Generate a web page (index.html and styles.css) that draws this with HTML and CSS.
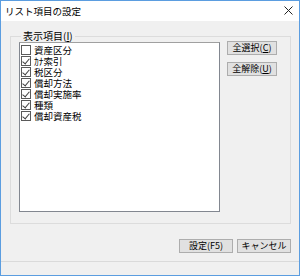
FILE: index.html
```html
<!DOCTYPE html>
<html lang="ja">
<head>
    <meta charset="UTF-8">
    <title>リスト項目の設定</title>
    <link rel="stylesheet" href="styles.css">
</head>
<body>
    <div class="window">
        <div class="titlebar">
            <span class="title">リスト項目の設定</span>
            <span class="close">
                <svg width="9" height="9" viewBox="0 0 9 9">
                    <path d="M0.5 0.5 L8.5 8.5 M8.5 0.5 L0.5 8.5" stroke="#222" stroke-width="1" fill="none"/>
                </svg>
            </span>
        </div>
        <div class="body">
            <fieldset class="group">
                <legend>表示項目(<u>I</u>)</legend>
                <div class="group-inner">
                    <ul class="list">
                        <li><span class="check"></span>資産区分</li>
                        <li><span class="check on"></span>ｶﾅ索引</li>
                        <li><span class="check on"></span>税区分</li>
                        <li><span class="check on"></span>償却方法</li>
                        <li><span class="check on"></span>償却実施率</li>
                        <li><span class="check on"></span>種類</li>
                        <li><span class="check on"></span>償却資産税</li>
                    </ul>
                    <div class="side-buttons">
                        <button class="btn">全選択(<u>C</u>)</button>
                        <button class="btn">全解除(<u>U</u>)</button>
                    </div>
                </div>
            </fieldset>
            <div class="footer">
                <button class="btn btn-wide">設定(F5)</button>
                <button class="btn btn-wide">キャンセル</button>
            </div>
        </div>
        <div class="statusbar"></div>
    </div>
</body>
</html>
```

FILE: styles.css
```css
*{
    margin: 0;
    padding: 0;
    box-sizing: border-box;
}
body{
    font-family: "Noto Sans CJK JP", sans-serif;
    font-size: 10px;
    color: #000;
    background: #fff;
}
.window{
    width: 300px;
    height: 276px;
    border: 1px solid #5b9de0;
    display: flex;
    flex-direction: column;
    background-color: #f0f0f0;
}
.titlebar{
    height: 20px;
    background-color: #fff;
    display: flex;
    justify-content: space-between;
    align-items: center;
    padding: 0 6px 1px 4px;
}
.title{
    font-size: 9.5px;
    line-height: 12px;
}
.close{
    display: flex;
}
.body{
    height: 240px;
    padding: 10px 8px 0 9px;
}
.group{
    border: 1px solid #dcdcdc;
    padding: 1px 13px 11px 8px;
    height: 193px;
}
.group legend{
    line-height: 10px;
    padding: 0 2px;
    margin-left: 2px;
    font-size: 10px;
}
.group-inner{
    display: flex;
    justify-content: space-between;
}
.list{
    list-style: none;
    width: 201px;
    height: 170px;
    background-color: #fff;
    border: 1px solid #828790;
    border-top-color: #a0a0a0;
    padding: 1px 0 0 1px;
}
.list li{
    height: 11px;
    line-height: 10px;
    display: flex;
    align-items: center;
    gap: 3px;
    font-size: 9.5px;
    white-space: nowrap;
}
.check{
    flex: none;
    width: 10px;
    height: 10px;
    border: 1px solid #5a5a5a;
    background-color: #fff;
    position: relative;
}
.check.on::after{
    content: "";
    position: absolute;
    left: 2px;
    top: 0px;
    width: 3px;
    height: 6px;
    border-right: 1px solid #404040;
    border-bottom: 1px solid #404040;
    transform: rotate(40deg);
}
.side-buttons{
    display: flex;
    flex-direction: column;
    gap: 7px;
    margin-top: -1px;
}
.btn{
    font-family: "Noto Sans CJK JP", sans-serif;
    font-size: 9px;
    line-height: 12px;
    height: 14px;
    width: 50px;
    background-color: #e1e1e1;
    border: 1px solid #adadad;
    color: #000;
}
.btn u{
    text-decoration: underline;
}
.footer{
    display: flex;
    justify-content: flex-end;
    gap: 4px;
    margin-top: 15px;
}
.btn-wide{
    width: 54px;
}
.statusbar{
    height: 14px;
    border-top: 1px solid #dadada;
}
```
